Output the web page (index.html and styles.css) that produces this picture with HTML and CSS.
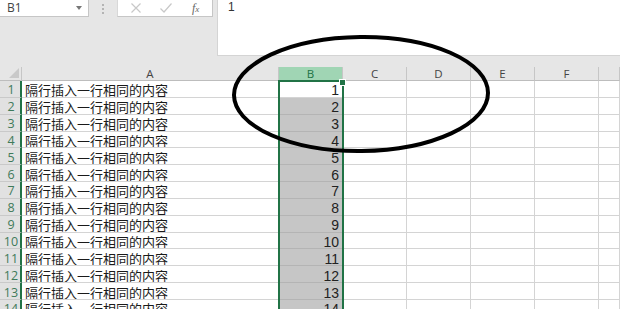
FILE: index.html
```html
<!DOCTYPE html>
<html>
<head>
<meta charset="utf-8">
<link rel="stylesheet" href="styles.css">
</head>
<body>
<div class="app">
  <div class="fbar">
    <div class="namebox"><span class="ref">B1</span><span class="caret"></span></div>
    <div class="grip"><i></i><i></i><i></i></div>
    <div class="btns">
      <svg class="ico" width="12" height="12" viewBox="0 0 12 12"><path d="M1.5 1.5 L10.5 10.5 M10.5 1.5 L1.5 10.5" stroke="#c8c8c8" stroke-width="1.2" fill="none"/></svg>
      <svg class="ico" width="14" height="12" viewBox="0 0 14 12"><path d="M1.5 6.5 L5 10 L12.5 1.5" stroke="#c8c8c8" stroke-width="1.2" fill="none"/></svg>
      <span class="fx"><i>f</i><i class="x">x</i></span>
    </div>
    <div class="input">1</div>
  </div>
  <div class="sheet">
    <div class="grid" id="grid"></div>
    <div class="sel"><span class="handle"></span></div>
  </div>
  <svg class="ellipse" width="620" height="309" viewBox="0 0 620 309"><ellipse cx="361" cy="94" rx="127" ry="57" transform="rotate(-0.6 361 94)" fill="none" stroke="#000" stroke-width="4"/></svg>
</div>
<script src="app.js"></script>
</body>
</html>
```
FILE: app.js
```js
var g = document.getElementById('grid');
var cols = ['A','B','C','D','E','F',''];
var h = '<div class="corner"><span class="tri"></span></div>';
cols.forEach(function(c){ h += '<div class="ch' + (c==='B'?' chsel':'') + '">' + c + '</div>'; });
for (var r = 1; r <= 14; r++) {
  h += '<div class="rh">' + r + '</div>';
  h += '<div class="c ctext"><span>隔行插入一行相同的内容</span></div>';
  h += '<div class="c cnum' + (r>1?' cgray':' cact') + '">' + r + '</div>';
  for (var k = 0; k < 5; k++) h += '<div class="c"></div>';
}
g.innerHTML = h;
```
FILE: styles.css
```css
html, body { margin: 0; padding: 0; }
body { width: 620px; height: 309px; overflow: hidden; background: #e6e6e6; font-family: "Liberation Sans", "Noto Sans CJK SC", sans-serif; }
.app { position: relative; width: 620px; height: 309px; }
.fbar { display: flex; height: 56px; align-items: flex-start; }
.namebox { width: 89px; height: 17px; background: #fff; border-right: 1px solid #c6c6c6; border-bottom: 1px solid #c6c6c6; display: flex; align-items: center; justify-content: space-between; box-sizing: border-box; padding: 0 6px 1px 7px; }
.ref { font-family: "Open Sans", "Liberation Sans", sans-serif; font-size: 12px; color: #444; }
.caret { width: 0; height: 0; border-left: 3.5px solid transparent; border-right: 3.5px solid transparent; border-top: 4px solid #777; }
.grip { width: 28px; height: 17px; display: flex; flex-direction: column; align-items: center; justify-content: center; gap: 2px; }
.grip i { width: 2px; height: 2px; background: #b4b4b4; display: block; }
.btns { width: 96px; height: 17px; box-sizing: border-box; background: #fff; border-right: 1px solid #c6c6c6; border-bottom: 1px solid #c6c6c6; border-left: 1px solid #d8d8d8; display: flex; align-items: center; padding-left: 12px; gap: 17px; }
.ico { display: block; }
.fx { font-family: "Liberation Serif", serif; font-size: 12px; color: #666; font-style: italic; margin-left: 2px; }
.fx .x { font-size: 9px; }
.input { margin-left: 4px; flex: 1; height: 56px; background: #fff; border-left: 1px solid #d4d4d4; border-bottom: 1px solid #d4d4d4; box-sizing: border-box; font-family: "Liberation Sans", sans-serif; font-size: 12px; color: #333; padding: 0 0 0 10px; line-height: 14px; }
.sheet { position: absolute; left: 0; top: 67px; width: 620px; height: 242px; overflow: hidden; }
.grid { display: grid; grid-template-columns: 22px 257px 64px 64px 64px 64px 64px 21px; grid-template-rows: 14px; grid-auto-rows: 16.85px; background: #fff; }
.corner { background: #e6e6e6; border-right: 1px solid #c6c6c6; border-bottom: 1px solid #bdbdbd; box-sizing: border-box; position: relative; }
.tri { position: absolute; right: 2px; bottom: 2px; width: 0; height: 0; border-left: 10px solid transparent; border-bottom: 10px solid #c9c9c9; }
.ch { background: #e6e6e6; border-right: 1px solid #c6c6c6; border-bottom: 1px solid #bdbdbd; box-sizing: border-box; font-family: "Open Sans", "Liberation Sans", sans-serif; font-size: 11.5px; color: #444; text-align: center; line-height: 14px; }
.chsel { background: #a0d5b4; color: #217346; border-bottom-color: #a0d5b4; }
.rh { background: #e1e1e1; border-right: 2px solid #217346; border-bottom: 1px solid #c9c9c9; box-sizing: border-box; font-family: "Open Sans", "Liberation Sans", sans-serif; font-size: 12.5px; color: #3f7a5a; line-height: 14px; padding: 3px 0 0 2px; display: flex; align-items: center; justify-content: center; overflow: hidden; }
.c { border-right: 1px solid #d4d4d4; border-bottom: 1px solid #d4d4d4; box-sizing: border-box; background: #fff; display: flex; align-items: center; line-height: 14px; overflow: hidden; }
.ctext { font-family: "Noto Sans CJK SC", sans-serif; font-size: 13px; color: #1a1a1a; padding: 3px 0 0 3px; white-space: nowrap; }
.cnum { justify-content: flex-end; font-family: "Liberation Sans", sans-serif; font-size: 14px; color: #222; padding: 3px 3px 0 0; }
.cgray { background: #c6c6c6; border-bottom-color: #b4b4b4; }
.sel { position: absolute; left: 278px; top: 13px; width: 66px; height: 240px; box-sizing: border-box; border: 2px solid #217346; border-bottom: none; }
.handle { position: absolute; right: -4px; top: -3px; width: 5px; height: 5px; background: #217346; border: 1px solid #fff; }
.ellipse { position: absolute; left: 0; top: 0; pointer-events: none; }
```
